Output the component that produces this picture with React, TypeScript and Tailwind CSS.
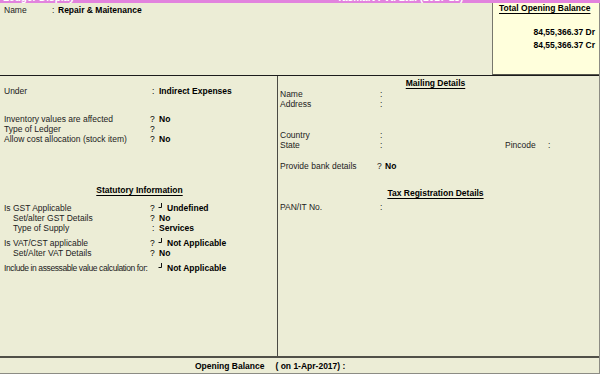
import type { ReactNode } from 'react';

const FONT = { fontFamily: '"Liberation Sans", Arial, sans-serif' };

// small "┘" mark Tally draws before a picked list value
function Mark() {
  return (
    <span className="inline-block w-[10px] h-[10px] align-top">
      <svg width="6" height="6" viewBox="0 0 6 6" className="ml-[1px]">
        <path d="M3.5 0 V4.5 H0.5" stroke="#111" strokeWidth="1" fill="none" />
      </svg>
    </span>
  );
}

type RowProps = {
  label: string;
  sep?: string;
  mark?: boolean;
  value?: ReactNode;
  indent?: boolean;
  tight?: boolean;
  labelW?: string;
  className?: string;
};

function LeftRow({ label, sep = '', mark, value, indent, tight, className = '' }: RowProps) {
  return (
    <div className={`flex h-[10px] leading-[10px] pl-[4px] whitespace-nowrap ${className}`}>
      <span
        className={`w-[146px] text-[#222] ${indent ? 'pl-[9px]' : ''} ${tight ? 'tracking-[-0.4px]' : ''}`}
      >
        {label}
      </span>
      {mark ? (
        <>
          <span className="w-[7px]">{sep}</span>
          <Mark />
        </>
      ) : (
        <span className={`w-[9px] ${sep === ':' ? 'pl-[2px]' : ''}`}>{sep}</span>
      )}
      <span className="font-bold text-black">{value}</span>
    </div>
  );
}

function RightRow({ label, sep = ':', labelW = 'w-[100px]', value, className = '' }: RowProps) {
  return (
    <div className={`flex h-[10px] leading-[10px] pl-[2px] whitespace-nowrap ${className}`}>
      <span className={`${labelW} text-[#222]`}>{label}</span>
      <span className="w-[8px] text-[#222]">{sep}</span>
      {value && <span className="font-bold text-black">{value}</span>}
    </div>
  );
}

function Heading({ children, className = '' }: { children: ReactNode; className?: string }) {
  return (
    <div className={`h-[10px] leading-[10px] font-bold text-black underline underline-offset-2 ${className}`}>
      {children}
    </div>
  );
}

export default function App() {
  return (
    <div className="w-[600px] h-[374px] bg-[#ecedd6] text-[8.5px] overflow-hidden flex flex-col" style={FONT}>
      {/* title bar, clipped at the top of the capture */}
      <div className="h-[3px] bg-[#e283de] overflow-hidden flex text-white font-bold text-[10px] leading-[10px]">
        <span className="-mt-[7px] pl-[3px]">Ledger Display</span>
        <span className="-mt-[7px] ml-[262px]">Tasmart Pvt. Ltd. (2017-18)</span>
      </div>

      <div className="flex-1 flex flex-col border-r border-[#8c8c84] border-b border-b-[#8c8c84]">
        {/* top: name + total opening balance */}
        <div className="h-[73px] flex border-b border-[#1c1c1c]">
          <div className="flex-1 pt-[2px]">
            <div className="flex h-[10px] leading-[10px] pl-[4px]">
              <span className="w-[48px] text-[#222]">Name</span>
              <span className="w-[6px] text-[#222]">:</span>
              <span className="font-bold">Repair &amp; Maitenance</span>
            </div>
          </div>
          <div className="w-[107px] bg-[#ffffdc] border-l border-[#77776c] border-b border-b-[#55554c] pr-[4px]">
            <div className="pl-[6px] h-[10px] leading-[10px] font-bold underline underline-offset-2">
              Total Opening Balance
            </div>
            <div className="mt-[13px] text-right font-bold leading-[13px]">
              <div>84,55,366.37 Dr</div>
              <div>84,55,366.37 Cr</div>
            </div>
          </div>
        </div>

        {/* main two columns */}
        <div className="flex-1 flex">
          <div className="w-[278px] border-r border-[#4a4a44]">
            <LeftRow className="mt-[10px]" label="Under" sep=":" value="Indirect Expenses" />
            <LeftRow className="mt-[18px]" label="Inventory values are affected" sep="?" value="No" />
            <LeftRow label="Type of Ledger" sep="?" />
            <LeftRow label="Allow cost allocation (stock item)" sep="?" value="No" />

            <Heading className="mt-[41px] text-center pl-[2px]">Statutory Information</Heading>

            <LeftRow className="mt-[8px]" label="Is GST Applicable" sep="?" mark value="Undefined" />
            <LeftRow indent label="Set/alter GST Details" sep="?" value="No" />
            <LeftRow indent label="Type of Supply" sep=":" value="Services" />
            <LeftRow className="mt-[5px]" label="Is VAT/CST applicable" sep="?" mark value="Not Applicable" />
            <LeftRow indent label="Set/Alter VAT Details" sep="?" value="No" />
            <LeftRow
              className="mt-[5px]"
              label="Include in assessable value calculation for:"
              sep=""
              mark
              tight
              value="Not Applicable"
            />
          </div>

          <div className="flex-1">
            <Heading className="mt-[2px] text-center pr-[6px]">Mailing Details</Heading>
            <RightRow className="mt-[1px]" label="Name" />
            <RightRow label="Address" />
            <RightRow className="mt-[21px]" label="Country" />
            <div className="flex h-[10px] leading-[10px] pl-[2px] whitespace-nowrap text-[#222]">
              <span className="w-[100px]">State</span>
              <span className="w-[125px]">:</span>
              <span className="w-[43px]">Pincode</span>
              <span>:</span>
            </div>
            <RightRow className="mt-[11px]" label="Provide bank details" labelW="w-[97px]" sep="?" value="No" />

            <Heading className="mt-[17px] text-center pr-[6px]">Tax Registration Details</Heading>
            <RightRow className="mt-[4px]" label="PAN/IT No." />
          </div>
        </div>

        {/* bottom opening balance bar */}
        <div className="h-[17px] border-t-2 border-[#505048] flex items-center font-bold leading-[10px] pl-[195px]">
          <span>Opening Balance</span>
          <span className="ml-[11px]">( on 1-Apr-2017) :</span>
        </div>
      </div>
    </div>
  );
}
